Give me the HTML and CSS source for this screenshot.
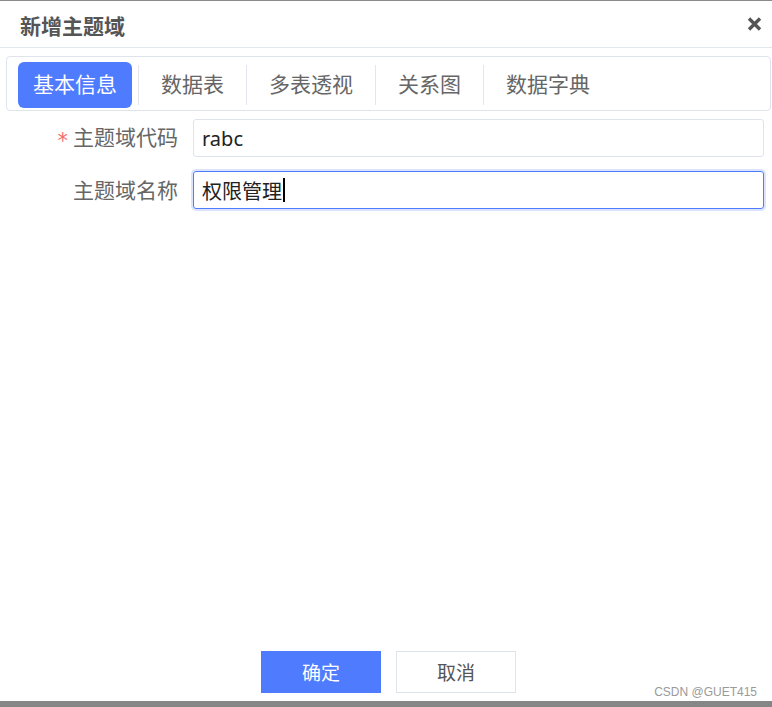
FILE: index.html
```html
<!DOCTYPE html>
<html lang="zh-CN">
<head>
<meta charset="utf-8">
<title>新增主题域</title>
<link rel="stylesheet" href="styles.css">
</head>
<body>
<div class="dialog">
  <div class="header">
    <span class="title">新增主题域</span>
    <span class="close" aria-label="关闭">
      <svg width="15" height="14" viewBox="0 0 15 14"><path d="M2 1.5 L13 12.5 M13 1.5 L2 12.5" stroke="#555" stroke-width="3.4" stroke-linecap="butt" fill="none"/></svg>
    </span>
  </div>
  <div class="tabs">
    <div class="tab active">基本信息</div>
    <div class="sep first"></div>
    <div class="tab">数据表</div>
    <div class="sep"></div>
    <div class="tab">多表透视</div>
    <div class="sep"></div>
    <div class="tab">关系图</div>
    <div class="sep"></div>
    <div class="tab">数据字典</div>
  </div>
  <div class="form">
    <div class="label"><span class="req">*</span>主题域代码</div>
    <div class="input">rabc</div>
    <div class="label">主题域名称</div>
    <div class="input focused">权限管理<span class="caret"></span></div>
  </div>
  <div class="spacer"></div>
  <div class="footer">
    <button class="btn primary">确定</button>
    <button class="btn">取消</button>
  </div>
  <div class="bottombar"></div>
  <div class="watermark">CSDN @GUET415</div>
</div>
</body>
</html>
```

FILE: styles.css
```css
* { box-sizing: border-box; }
html, body { margin: 0; padding: 0; background: #fff; }
body {
  font-family: "Noto Sans", "Noto Sans CJK SC", sans-serif;
  width: 772px;
  height: 707px;
  overflow: hidden;
}
.dialog {
  position: relative;
  height: 707px;
  display: flex;
  flex-direction: column;
  border-top: 1px solid #8a8a8a;
}
.header {
  height: 47px;
  border-bottom: 1px solid #e3e7ef;
  display: flex;
  align-items: center;
  justify-content: space-between;
  padding: 1px 10px 0 20px;
}
.title {
  font-size: 21px;
  font-weight: bold;
  color: #555;
  font-family: "Noto Sans CJK SC", sans-serif;
}
.close { display: flex; margin-top: -2px; }
.tabs {
  margin: 8px 1px 0 6px;
  height: 55px;
  border: 1px solid #dfe3ec;
  border-radius: 4px;
  padding: 4px 11px 2px;
  display: flex;
  align-items: center;
}
.tab {
  height: 46px;
  display: flex;
  align-items: center;
  padding: 0 22px 3px;
  font-size: 21px;
  color: #666;
  font-family: "Noto Sans CJK SC", sans-serif;
}
.tab.active {
  background: #4f7bff;
  color: #fff;
  border-radius: 6px;
  padding: 0 15px 3px;
}
.sep {
  width: 1px;
  height: 40px;
  background: #e3e6ed;
}
.sep.first { margin-left: 6px; }
.form {
  margin: 8px 8px 0 0;
  display: grid;
  grid-template-columns: 178px 1fr;
  column-gap: 15px;
  row-gap: 14px;
  align-items: center;
}
.label {
  text-align: right;
  font-size: 21px;
  color: #666;
  font-family: "Noto Sans CJK SC", sans-serif;
  padding-bottom: 2px;
}
.req {
  color: #f56c6c;
  margin-right: 5px;
  font-family: "DejaVu Sans", sans-serif;
  font-size: 21px;
  display: inline-block;
  vertical-align: -3px;
}
.input {
  height: 38px;
  border: 1px solid #dfe3ec;
  border-radius: 3px;
  padding: 0 8px;
  display: flex;
  align-items: center;
  font-size: 20px;
  color: #222;
  font-family: "Noto Sans", "Noto Sans CJK SC", sans-serif;
}
.input.focused {
  border-color: #4f7bff;
  box-shadow: 0 0 0 2px #dce4fd;
}
.caret {
  display: inline-block;
  width: 2px;
  height: 24px;
  background: #000;
  margin-left: 1px;
}
.spacer { flex: 1; }
.footer {
  display: flex;
  justify-content: center;
  gap: 15px;
  padding-left: 5px;
  margin-bottom: 8px;
}
.btn {
  width: 120px;
  height: 42px;
  border: 1px solid #dfe3ec;
  background: #fff;
  color: #555;
  font-size: 19px;
  font-family: "Noto Sans CJK SC", sans-serif;
  padding: 0 0 2px;
  border-radius: 0;
}
.btn.primary {
  background: #4f7bff;
  border-color: #4f7bff;
  color: #fff;
}
.bottombar {
  height: 6px;
  background: #868686;
}
.watermark {
  position: absolute;
  right: 15px;
  bottom: 8px;
  font-family: "Liberation Sans", Arial, sans-serif;
  font-size: 12px;
  color: #9a9a9a;
}
```
